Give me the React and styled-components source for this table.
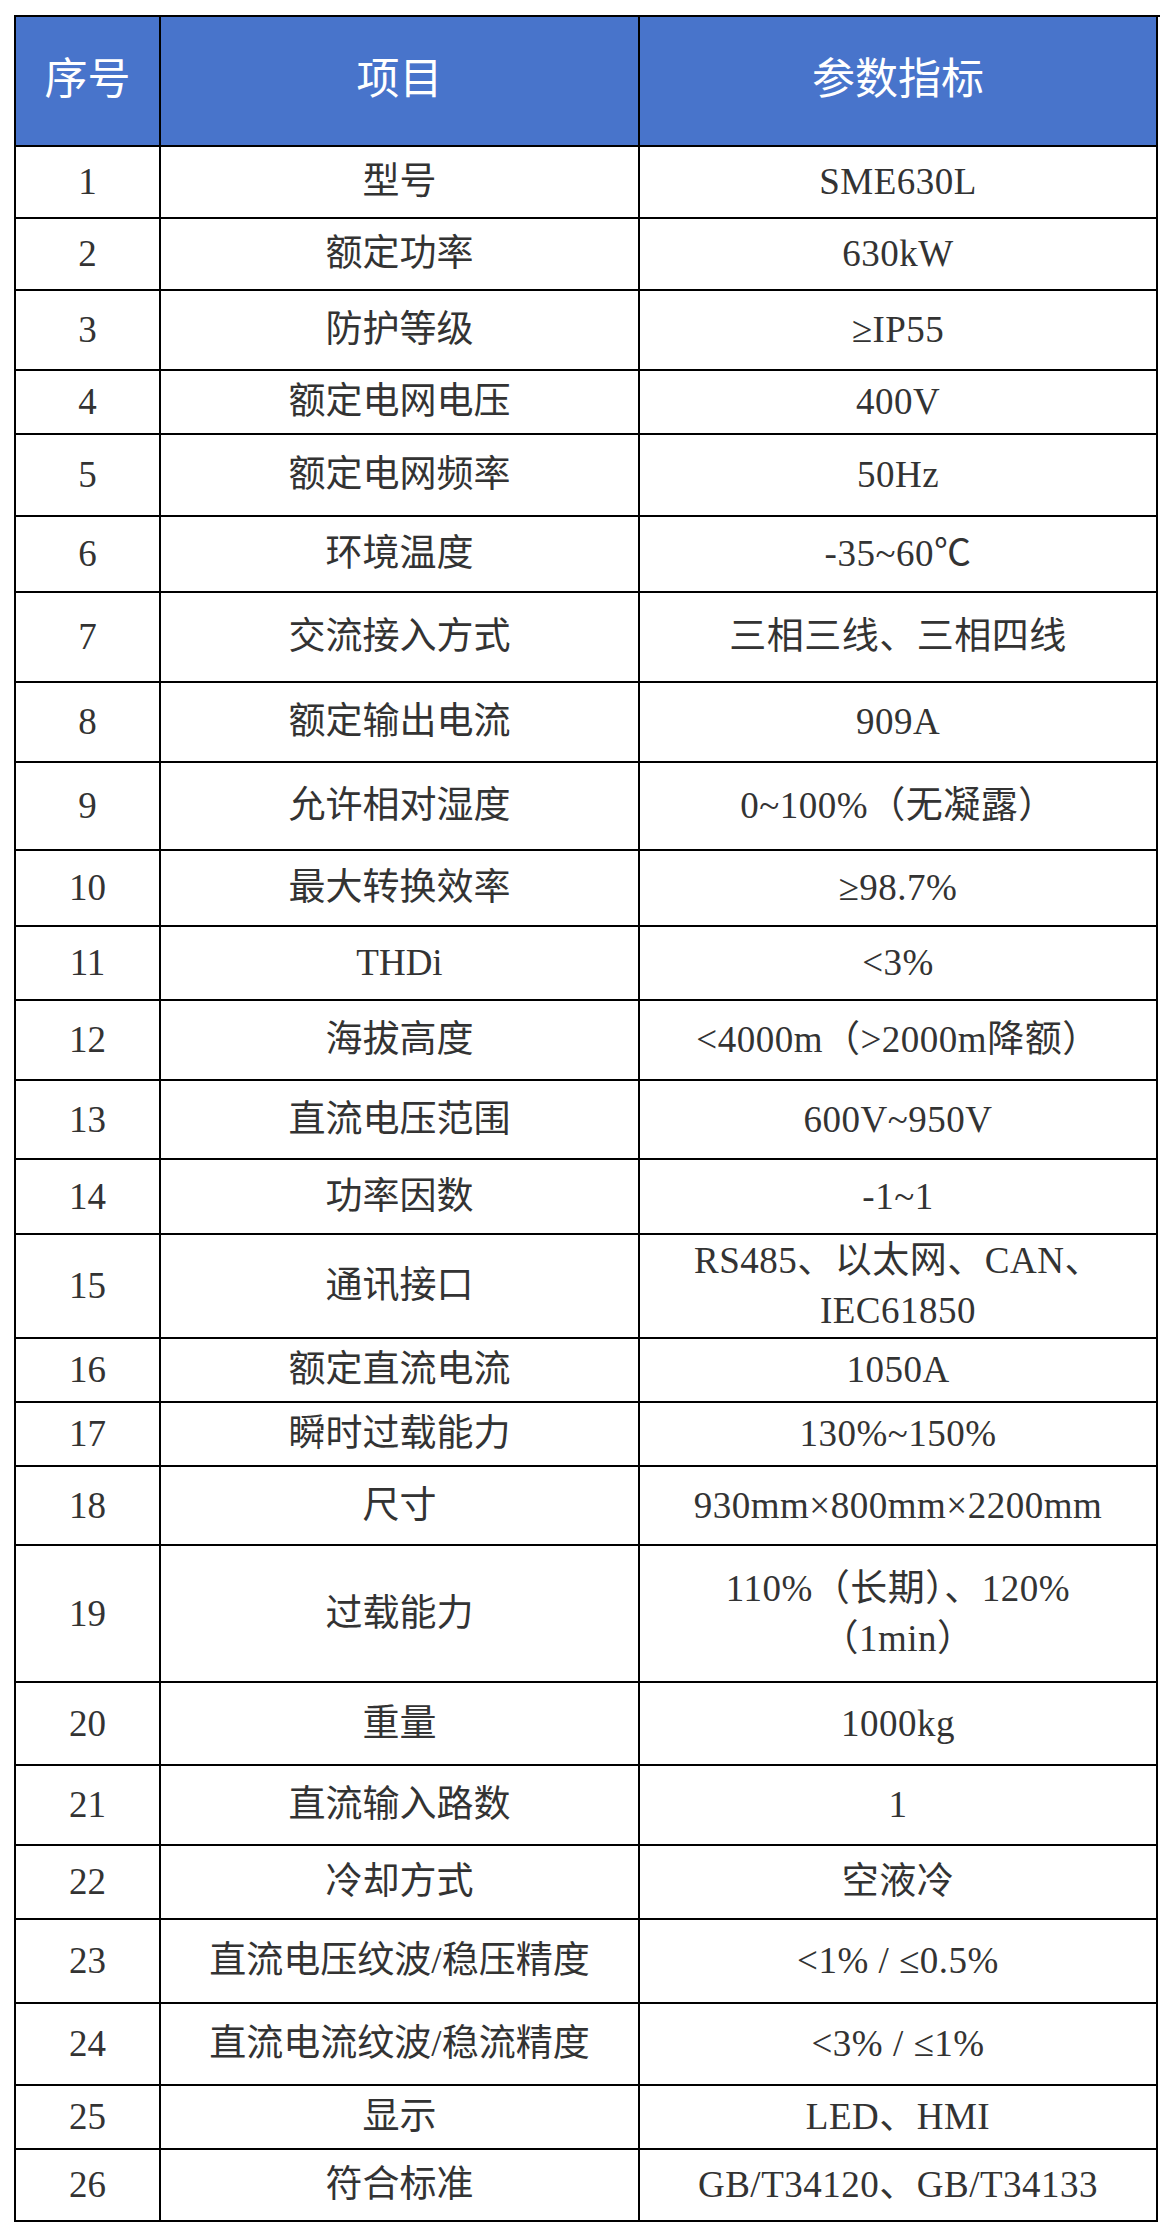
import React from 'react';
import styled, { createGlobalStyle } from 'styled-components';

const GlobalStyle = createGlobalStyle`
  body {
    margin: 0;
    background: #fff;
    font-family: "Liberation Serif", "Noto Sans CJK SC", serif;
  }
`;

// [序号, 项目, 参数指标, row height]
const rows = [
  ['1', '型号', 'SME630L', 72],
  ['2', '额定功率', '630kW', 72],
  ['3', '防护等级', '≥IP55', 80],
  ['4', '额定电网电压', '400V', 64],
  ['5', '额定电网频率', '50Hz', 82],
  ['6', '环境温度', '-35~60℃', 76],
  ['7', '交流接入方式', '三相三线、三相四线', 90],
  ['8', '额定输出电流', '909A', 80],
  ['9', '允许相对湿度', '0~100%（无凝露）', 88],
  ['10', '最大转换效率', '≥98.7%', 76],
  ['11', 'THDi', '<3%', 74],
  ['12', '海拔高度', '<4000m（>2000m降额）', 80],
  ['13', '直流电压范围', '600V~950V', 79],
  ['14', '功率因数', '-1~1', 75],
  ['15', '通讯接口', 'RS485、以太网、CAN、IEC61850', 104],
  ['16', '额定直流电流', '1050A', 64],
  ['17', '瞬时过载能力', '130%~150%', 64],
  ['18', '尺寸', '930mm×800mm×2200mm', 79],
  ['19', '过载能力', '110%（长期）、120%\u200B（1min）', 137],
  ['20', '重量', '1000kg', 83],
  ['21', '直流输入路数', '1', 80],
  ['22', '冷却方式', '空液冷', 74],
  ['23', '直流电压纹波/稳压精度', '<1% / ≤0.5%', 84],
  ['24', '直流电流纹波/稳流精度', '<3% / ≤1%', 82],
  ['25', '显示', 'LED、HMI', 64],
  ['26', '符合标准', 'GB/T34120、GB/T34133', 72],
];

const Sheet = styled.div`
  margin: 15px 0 0 14px;
  width: 1144px;
  border-left: 2px solid #000;
  border-top: 2px solid #000;
`;

const Row = styled.div`
  display: grid;
  grid-template-columns: 145px 479px 518px;
  height: ${(p) => p.$h}px;
`;

const Cell = styled.div`
  box-sizing: border-box;
  border-right: 2px solid #000;
  border-bottom: 2px solid #000;
  display: flex;
  align-items: center;
  justify-content: center;
  text-align: center;
  padding: 0 18px;
  font-size: 37px;
  line-height: 50px;
  color: #333;
`;

const HeadCell = styled(Cell)`
  background: #4874cb;
  color: #fff;
  font-size: 43px;
  padding-bottom: 2px;
`;

const ValueCell = styled(Cell)`
  padding: 0 38px;
  letter-spacing: 0.5px;
`;

export default function App() {
  return (
    <>
      <GlobalStyle />
      <Sheet>
        <Row $h={130}>
          <HeadCell>序号</HeadCell>
          <HeadCell>项目</HeadCell>
          <HeadCell>参数指标</HeadCell>
        </Row>
        {rows.map(([no, item, value, h]) => (
          <Row key={no} $h={h}>
            <Cell>{no}</Cell>
            <Cell>{item}</Cell>
            <ValueCell>{value}</ValueCell>
          </Row>
        ))}
      </Sheet>
    </>
  );
}
